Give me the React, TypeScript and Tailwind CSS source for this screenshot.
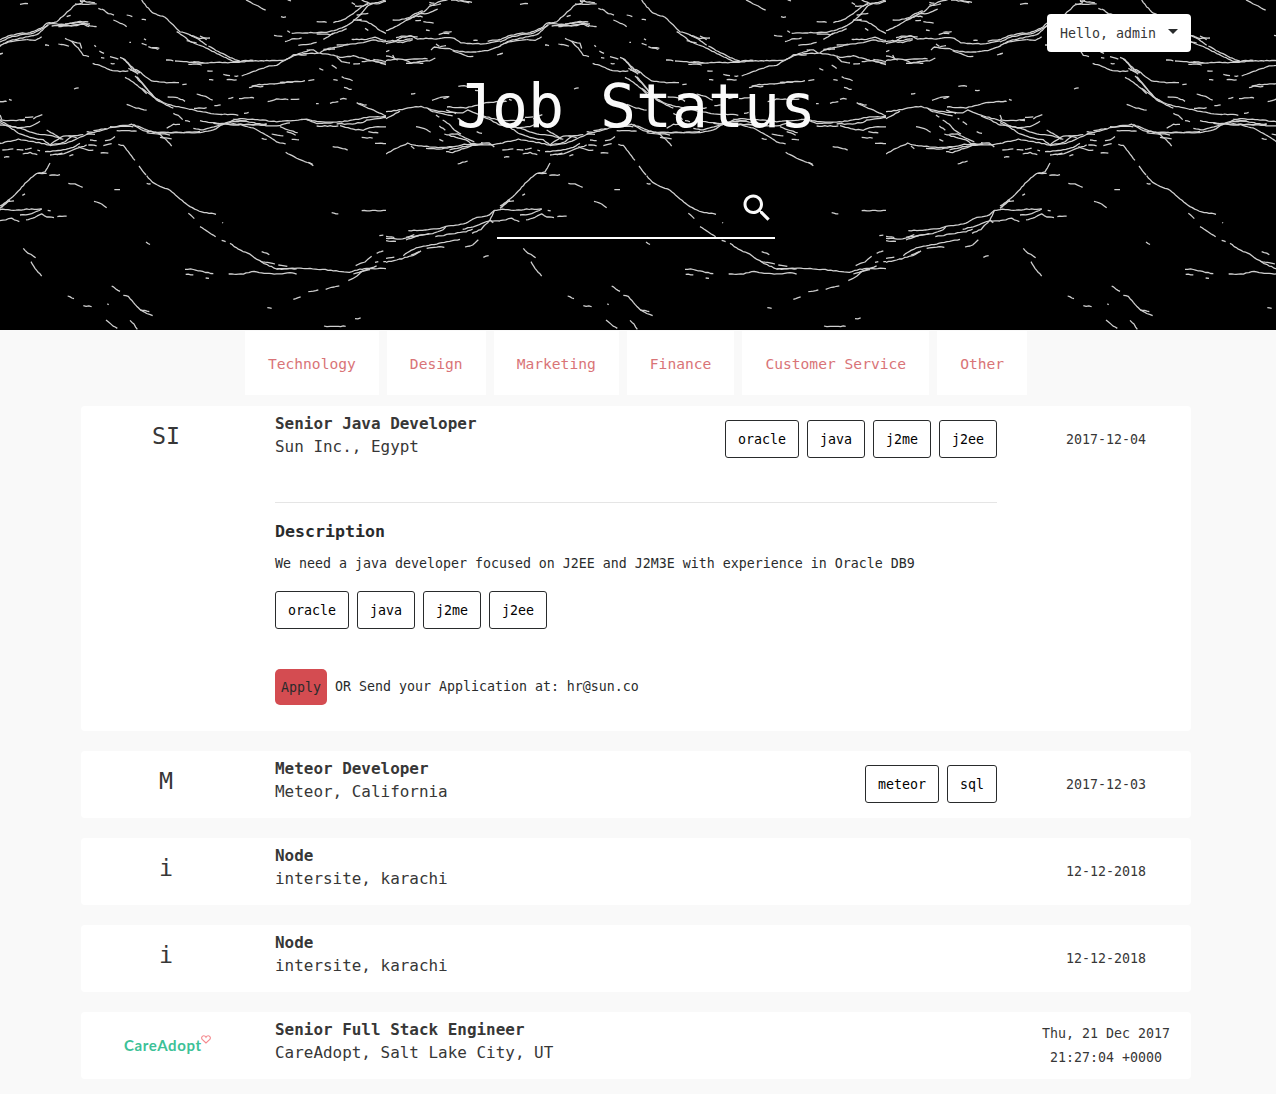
import React from "react";

/* Contour strokes of the header artwork, on a 1500 x 990 grid (three units per pixel). */
const WEST: string[] = [
  "0,92 20,84 45,70 65,60 80,52 100,40 115,35 130,20 150,10 165,3 185,0",
  "60,60 85,50 100,42 125,40 155,27", "20,60 40,60 65,55 80,45 110,32",
  "195,0 225,3 250,8", "225,2 258,6", "130,7 145,9", "130,14 150,16 165,12",
  "112,65 130,67 143,70", "88,62 105,62", "90,48 110,50", "120,90 131,92",
  "158,104 172,100", "172,97 197,95", "172,100 190,100",
  "0,131 25,125 50,112 75,108 95,118 120,115 150,117 185,113 205,115 225,128 260,131 300,132 342,122",
  "0,125 20,122 50,122 80,115", "20,125 50,127 80,120", "30,113 55,108 95,110",
  "135,150 145,142 170,145 185,145 205,152 230,155 270,155 305,152 345,137",
  "150,132 160,140", "200,152 225,162 245,170 262,170", "160,142 180,137", "262,121 275,122",
  "305,124 342,118", "333,165 350,160",
  "0,182 20,178 50,178 75,188 100,185 130,182 148,175", "0,168 20,172 35,180", "0,155 10,150",
  "55,180 85,176 125,176", "60,190 90,188 112,190", "20,165 25,175",
  "217,259 243,258", "267,271 281,271", "75,282 88,281", "138,301 160,294", "160,293 190,289", "172,295 187,291",
  "0,335 40,330 75,322 105,319 122,325 150,333 190,337 230,338 245,330 270,340 300,350 342,362",
  "0,356 30,340 42,333", "183,321 240,323 275,315 300,308 360,304", "285,348 310,358 342,375",
  "125,325 140,335 170,340 185,346 200,348", "180,330 210,340", "150,345 160,352",
  "170,360 190,373 205,390 225,403", "215,355 220,358", "230,365 243,375",
  "90,380 115,385 134,396", "160,378 178,390", "272,395 288,400", "160,418 172,424",
  "175,402 210,412 240,420 255,430 290,432", "190,403 215,402 230,410 265,425",
  "0,462 30,445 65,430 90,437 130,440 165,443 200,440 235,433 270,434 320,435 345,430",
  "75,438 85,445", "120,445 160,448 200,440", "180,455 200,457 235,445 260,435", "190,450 230,440 290,432",
  "285,428 310,430 325,440", "215,492 230,487 245,484",
  "67,692 110,691 160,686 180,680 240,670 265,655 310,645 325,632 345,628",
  "0,715 50,717 100,705 140,700 170,690 180,680", "0,722 30,725", "0,709 25,712",
  "60,720 90,708 130,700", "60,712 85,705", "148,710 190,703 240,695 260,688",
  "230,688 270,678 310,662", "312,660 325,632", "258,700 285,688 300,672 312,660",
  "312,662 342,664", "0,787 40,778 80,767 105,752", "52,767 75,750 105,740 160,730 222,718",
  "75,765 100,755", "122,745 160,740 175,742", "237,741 260,735 277,720", "0,775 25,772",
  "292,772 308,767", "312,660 322,668",
];

const EAST: string[] = [
  "0,120 25,108 60,100 90,98 110,90 130,80 140,70 170,65 200,38 225,15 245,10",
  "0,126 30,112 60,105 100,100 125,88 145,75", "0,137 30,122 60,115 110,105 145,74",
  "10,130 50,122 80,120", "80,118 105,121 125,110",
  "145,72 200,72 240,65 265,65", "155,78 190,76 230,78 250,70", "175,80 245,72 268,80",
  "195,72 235,68 270,72", "250,68 270,78 290,80", "225,12 265,12 290,12", "240,0 248,10",
  "245,3 285,8", "240,5 255,2", "200,50 212,46", "295,25 305,30", "305,27 325,40 342,45",
  "340,60 355,66 380,79", "380,45 397,49", "425,58 438,60", "60,13 84,10",
  "425,0 440,20 460,40 495,52 520,75 540,95 565,103 600,115 630,113",
  "530,95 550,108 570,125 610,140 650,160 700,185 760,180",
  "570,105 590,115 620,135", "625,138 655,155 690,172 720,183", "560,122 590,130", "600,108 620,118",
  "498,180 520,182",
  "525,183 560,185 600,190 650,187 700,188 750,183 800,182 855,181 880,165 920,160 960,160 1000,165 1020,172 1060,168 1110,180 1158,190",
  "565,193 590,192 605,195", "580,185 610,188",
  "725,228 760,215 800,200 830,195 860,178 880,167 905,158 930,150", "880,165 920,165",
  "670,223 690,227", "703,228 715,228", "680,239 710,240", "627,239 640,240", "622,213 638,214",
  "738,0 760,12 797,30", "843,50 858,52", "863,0 873,2", "822,106 847,109", "855,125 875,118 905,115", "862,92 870,97",
  "875,100 940,98 980,97 1010,90 1050,72 1075,50 1105,15 1158,0",
  "950,65 980,66", "1000,68 1030,60 1060,40 1085,20 1105,12", "950,102 990,104 1040,87",
  "1065,18 1090,18 1105,10", "1055,8 1065,15", "1085,0 1110,10 1130,12 1158,3", "1070,45 1105,40",
  "1070,60 1100,65 1120,75 1140,92 1158,100", "1095,85 1105,92", "1060,60 1085,58", "970,118 1000,100",
  "895,136 925,132 950,128", "960,158 985,145 1010,142 1050,132 1090,128 1120,120 1158,126",
  "970,148 1005,148", "1010,135 1045,132", "1055,118 1100,118 1125,112 1158,122", "920,150 940,150 955,160",
  "1010,170 1025,185 1050,190", "1060,192 1080,192", "1085,185 1120,182 1158,195", "1120,178 1158,185",
  "958,205 970,210", "995,195 1010,205", "1000,239 1013,241", "1025,230 1040,237 1058,241", "1032,262 1055,269",
  "747,263 770,255 840,250 870,245 915,243", "925,242 943,239", "755,258 790,260", "840,247 880,246",
  "590,282 610,287 638,300", "685,296 700,293", "717,296 750,292 762,294", "803,305 830,297 865,298",
  "872,298 898,297", "948,311 956,311", "990,310 1015,305", "1020,298 1030,294 1040,298", "643,317 662,315",
  "503,291 535,294", "535,295 555,303", "1070,308 1085,316 1105,325 1130,335 1158,348", "1078,310 1100,316",
  "0,162 8,160", "135,135 147,136", "175,132 190,133 207,138", "195,115 215,125 235,145 250,165 267,170",
  "215,123 240,130 245,145", "283,136 288,141", "298,153 312,160", "303,173 313,174", "330,170 355,178", "332,190 344,192",
  "278,190 300,197 330,210 360,214 385,213", "360,172 375,180 395,205 415,212 430,225 455,243 500,248 537,247",
  "547,254 560,253", "370,178 385,190 410,215", "385,205 415,222", "390,210 420,218",
  "405,228 430,255 460,290 490,308 520,318 560,325 600,335 650,342 715,345",
  "375,232 400,247 430,272 440,280", "410,230 440,265 470,300 520,325", "425,265 445,280 480,302",
  "222,267 236,263", "380,313 400,322 440,331", "582,325 620,324", "520,340 535,347 548,360",
  "425,130 440,135", "432,116 438,120", "388,127 393,128", "445,140 475,148", "455,143 478,144", "732,340 746,338",
  "0,305 20,303", "27,298 35,300", "0,360 40,362 75,358", "100,357 108,350 127,345", "60,360 75,362",
  "0,345 5,358", "75,352 100,350",
  "0,368 30,382 60,402 90,412 130,420 150,435", "0,375 25,378 50,383 90,380",
  "0,362 30,378 60,385 110,402 150,405 190,418", "90,380 120,365", "140,390 165,405 185,415",
  "0,430 55,418 100,425 150,435 190,428 215,410", "150,435 170,420 190,408 215,408 250,405",
  "150,437 200,430 240,412 265,400 300,393 330,383 360,378 395,373 430,392 460,395 500,398 560,397 600,395",
  "205,408 230,412", "260,395 280,398", "260,403 285,402", "280,392 320,385", "330,380 400,380", "350,392 410,392",
  "400,373 440,390 475,400 510,405", "475,400 500,420 515,438", "480,412 515,416", "440,398 480,402",
  "7,450 40,447", "50,449 70,451", "75,448 95,445", "112,450 120,452", "68,462 90,458 112,464", "12,472 28,470",
  "135,455 190,450 220,442 240,430", "150,465 185,462 215,452 260,435", "170,465 187,460", "208,468 220,463",
  "235,440 260,450 280,451", "265,435 290,437", "310,437 335,430", "315,422 330,420 345,410", "302,459 325,459", "270,420 290,422",
  "500,385 520,372 540,374", "555,362 570,364",
  "480,398 600,398 640,390 670,372 700,360 720,355 780,360 830,365 870,362 920,358 960,365 1010,367 1050,362 1100,352 1158,350",
  "600,362 650,370 700,372 760,375 830,378 870,368", "580,385 610,390 650,378 700,365 740,362",
  "640,370 700,375 800,372", "700,357 740,365 800,375", "1010,372 1050,372 1090,367 1100,360 1158,352",
  "715,372 760,385 790,400 830,425 857,432", "785,415 800,418", "815,402 850,408", "840,380 865,390 893,398",
  "860,395 887,405", "875,418 897,419", "920,360 950,370 1000,368", "950,378 1015,378",
  "1020,377 1060,388 1090,390 1110,382 1158,380", "1085,412 1118,414", "1105,395 1135,398", "1125,430 1158,430",
  "857,457 890,475 938,493", "925,487 940,498", "998,440 1020,443 1043,450",
  "355,433 370,437 385,455 405,482", "417,498 438,525",
  "440,527 457,547 480,558 510,570 540,597 570,620 605,637 620,638 648,642",
  "440,550 452,553", "343,569 360,568", "0,625 25,600 45,585 80,545 110,520 135,515 150,490",
  "112,520 140,520", "148,526 180,525", "0,618 20,605 42,602", "5,622 30,600", "205,550 225,552 248,563",
  "282,604 305,612 320,623", "67,586 75,582", "0,628 40,631 80,628 125,627", "60,645 95,642 125,627",
  "0,662 35,655 58,665", "78,660 105,652 125,642 140,650 162,652", "172,650 200,647", "143,631 152,632",
  "565,640 583,655", "600,680 625,695 647,711", "665,721 677,725",
  "690,730 715,748 750,763 785,787 830,807 890,807", "780,783 825,792", "835,795 862,800", "785,755 808,763",
  "830,807 900,804 960,808 1000,812 1048,817 1080,808 1100,805 1158,806",
  "555,808 580,808 600,813 640,822", "557,823 580,825", "617,834 627,835",
  "686,822 730,822 755,814 800,820 830,822 870,818 890,822",
  "1067,797 1095,785 1115,768", "1045,842 1070,828 1090,812 1130,798", "1060,822 1085,815 1110,808",
  "1125,787 1135,786", "1150,785 1158,784", "1130,760 1150,752", "1138,707 1150,706", "1085,632 1158,632",
  "995,638 1015,642", "667,667 669,669", "438,726 450,734", "70,745 85,760 107,772", "93,785 105,805 125,828",
  "335,858 360,875", "370,886 385,890 400,907 420,928 440,940 458,946", "420,930 448,934",
  "203,888 222,896", "250,917 275,919", "322,911 326,915", "318,960 333,973 352,986", "390,961 402,972 412,989",
  "880,898 902,890", "925,875 955,870", "977,868 995,861 1018,858", "802,923 815,925",
  "972,978 990,980 1015,980 1037,978", "1065,956 1082,955",
];

/* Breaks a stroke into short steps with a small repeatable wobble, like a scratched line. */
function roughen(points: string): string {
  const pts = points.split(" ").map((p) => p.split(",").map(Number));
  const out: string[] = [`${pts[0][0]},${pts[0][1]}`];
  for (let i = 1; i < pts.length; i++) {
    const [x0, y0] = pts[i - 1];
    const [x1, y1] = pts[i];
    const n = Math.max(1, Math.round(Math.hypot(x1 - x0, y1 - y0) / 8));
    for (let k = 1; k <= n; k++) {
      const x = x0 + ((x1 - x0) * k) / n;
      const y = y0 + ((y1 - y0) * k) / n;
      const s = Math.sin(x * 12.9898 + y * 78.233) * 43758.5453;
      out.push(`${x.toFixed(1)},${(y + (s - Math.floor(s) - 0.5) * 2.4).toFixed(1)}`);
    }
  }
  return out.join(" ");
}

function Ridges() {
  return (
    <svg className="absolute inset-0 h-[330px] w-[1276px]" viewBox="0 0 1276 330" aria-hidden="true">
      <defs>
        <pattern id="ridges" x="-114" y="0" width="500" height="330" patternUnits="userSpaceOnUse">
          <g transform="scale(0.33333)" fill="none" stroke="#d0d0d0" strokeWidth="3.8" strokeLinejoin="round">
            {WEST.map((p, i) => <polyline key={i} points={roughen(p)} />)}
            <g transform="translate(342 0)">
              {EAST.map((p, i) => <polyline key={i} points={roughen(p)} />)}
            </g>
          </g>
        </pattern>
      </defs>
      <rect width="1276" height="330" fill="url(#ridges)" />
    </svg>
  );
}

type Job = { mark: string; title: string; place: string; tags: string[]; date: string; logo?: boolean; open?: boolean };

const jobs: Job[] = [
  { mark: "SI", title: "Senior Java Developer", place: "Sun Inc., Egypt", tags: ["oracle", "java", "j2me", "j2ee"], date: "2017-12-04", open: true },
  { mark: "M", title: "Meteor Developer", place: "Meteor, California", tags: ["meteor", "sql"], date: "2017-12-03" },
  { mark: "i", title: "Node", place: "intersite, karachi", tags: [], date: "12-12-2018" },
  { mark: "i", title: "Node", place: "intersite, karachi", tags: [], date: "12-12-2018" },
  { mark: "", title: "Senior Full Stack Engineer", place: "CareAdopt, Salt Lake City, UT", tags: [], date: "Thu, 21 Dec 2017 21:27:04 +0000", logo: true },
];

function Tags({ items }: { items: string[] }) {
  return (
    <div className="flex gap-2">
      {items.map((t) => (
        <span key={t} className="flex h-[38px] items-center rounded-[3px] border border-[#292b2c] bg-white px-3 pt-0.5 text-[13.29px] leading-6 text-black">{t}</span>
      ))}
    </div>
  );
}

function CareLogo() {
  return (
    <div className="relative mt-[23px] ml-[43px] h-6 w-[92px] text-left">
      <span className="block font-['Lato'] text-[15px] leading-5 font-bold tracking-[0.6px] text-[#3cc197]">CareAdopt</span>
      <svg className="absolute top-0 left-[77px]" width="10" height="9" viewBox="0 0 10 9" fill="none" stroke="#f4888d" strokeWidth="1.1">
        <path d="M5 8 L1.2 4.4 C0 2.8 1 .8 2.7 .8 C3.9 .8 4.6 1.5 5 2.3 C5.4 1.5 6.1 .8 7.3 .8 C9 .8 10 2.8 8.8 4.4 Z" />
      </svg>
    </div>
  );
}

function JobCard({ job }: { job: Job }) {
  return (
    <article className={`flex rounded bg-white ${job.open ? "h-[325px]" : "h-[67px]"}`}>
      <div className="w-[170px] shrink-0 text-center">
        {job.logo ? <CareLogo /> : <div className="pt-[9px] text-[23.3px] leading-[42px]">{job.mark}</div>}
      </div>
      <div className="ml-6 w-[722px] shrink-0">
        <div className="flex h-[67px] justify-between">
          <div className="pt-[6px] text-[15.95px] leading-[23px]">
            <h2 className="font-bold">{job.title}</h2>
            <p>{job.place}</p>
          </div>
          <div className="pt-[14px]"><Tags items={job.tags} /></div>
        </div>
        {job.open && (
          <div className="mt-[29px] border-t border-black/10 pt-[17px] text-[#292b2c]">
            <h3 className="text-[16.61px] leading-6 font-bold">Description</h3>
            <p className="mt-2 mb-[15px] text-[13.29px] leading-6">We need a java developer focused on J2EE and J2M3E with experience in Oracle DB9</p>
            <Tags items={job.tags} />
            <div className="mt-10 flex gap-2 text-[13.29px]">
              <button className="h-9 rounded-[5px] bg-[#d44c51] px-[6px] pt-0.5 leading-6">Apply</button>
              <span className="pt-[6px] leading-6">OR Send your Application at: hr@sun.co</span>
            </div>
          </div>
        )}
      </div>
      <div className={`ml-[39px] w-[140px] shrink-0 text-center text-[13.29px] leading-6 ${job.logo ? "pt-[10px]" : "pt-[22px]"}`}>{job.date}</div>
    </article>
  );
}

const tabs = ["Technology", "Design", "Marketing", "Finance", "Customer Service", "Other"];

export default function App() {
  return (
    <div className="h-[1094px] w-[1276px] overflow-hidden bg-[#f9f9f9] font-['DejaVu_Sans_Mono',monospace] text-[#373737]">
      <header className="relative h-[330px] bg-black">
        <Ridges />
        <div className="relative ml-[81px] flex w-[1110px] flex-col items-center">
          <button className="mt-[14px] flex h-[38px] items-center self-end rounded bg-white px-[13px] pt-0.5 text-[13.29px] leading-6">
            Hello, admin
            <span className="mb-[5px] ml-3 border-x-[5px] border-t-[5px] border-x-transparent border-t-[#292b2c]" />
          </button>
          <h1 className="mt-[10px] text-[59.8px] leading-[88px] whitespace-pre text-[#fafafa]">Job Status</h1>
          <div className="mt-[28px] flex h-[61px] w-[278px] justify-end border-b-2 border-white pt-[12px]">
            <svg width="36" height="36" viewBox="0 0 24 24" fill="#fafafa">
              <path d="M15.5 14h-.79l-.28-.27C15.41 12.59 16 11.11 16 9.5 16 5.91 13.09 3 9.5 3S3 5.91 3 9.5 5.91 16 9.5 16c1.61 0 3.09-.59 4.23-1.57l.27.28v.79l5 4.99L20.49 19l-4.99-5zm-6 0C7.01 14 5 11.99 5 9.5S7.01 5 9.5 5 14 7.01 14 9.5 11.99 14 9.5 14z" />
            </svg>
          </div>
        </div>
      </header>
      <nav className="ml-[81px] flex w-[1110px] justify-center gap-2 pt-px">
        {tabs.map((t) => (
          <a key={t} className="flex h-16 items-center bg-white px-[23px] pt-0.5 text-[14.62px] leading-6 text-[#d97477]">{t}</a>
        ))}
      </nav>
      <main className="mt-[11px] ml-[81px] flex w-[1110px] flex-col gap-5">
        {jobs.map((j, i) => <JobCard key={i} job={j} />)}
      </main>
    </div>
  );
}
